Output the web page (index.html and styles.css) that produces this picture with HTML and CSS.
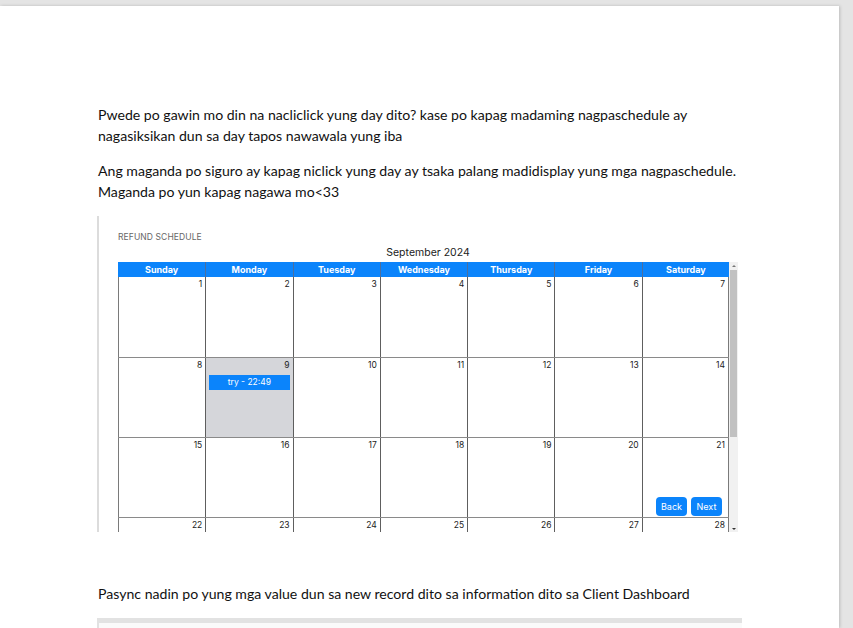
FILE: index.html
```html
<!DOCTYPE html>
<html>
<head>
<meta charset="utf-8">
<link rel="stylesheet" href="styles.css">
</head>
<body>
<div class="page">
  <p class="txt">Pwede po gawin mo din na nacliclick yung day dito? kase po kapag madaming nagpaschedule ay nagasiksikan dun sa day tapos nawawala yung iba</p>
  <p class="txt">Ang maganda po siguro ay kapag niclick yung day ay tsaka palang madidisplay yung mga nagpaschedule. Maganda po yun kapag nagawa mo&lt;33</p>
  <div class="shot">
    <div class="label">REFUND SCHEDULE</div>
    <div class="month">September 2024</div>
    <div class="cal">
      <div class="grid">
        <div class="head">
          <div>Sunday</div><div>Monday</div><div>Tuesday</div><div>Wednesday</div><div>Thursday</div><div>Friday</div><div>Saturday</div>
        </div>
        <div class="row first">
          <div class="cell"><span class="num">1</span></div>
          <div class="cell"><span class="num">2</span></div>
          <div class="cell"><span class="num">3</span></div>
          <div class="cell"><span class="num">4</span></div>
          <div class="cell"><span class="num">5</span></div>
          <div class="cell"><span class="num">6</span></div>
          <div class="cell"><span class="num">7</span></div>
        </div>
        <div class="row">
          <div class="cell"><span class="num">8</span></div>
          <div class="cell sel"><span class="num">9</span><div class="event">try - 22:49</div></div>
          <div class="cell"><span class="num">10</span></div>
          <div class="cell"><span class="num">11</span></div>
          <div class="cell"><span class="num">12</span></div>
          <div class="cell"><span class="num">13</span></div>
          <div class="cell"><span class="num">14</span></div>
        </div>
        <div class="row">
          <div class="cell"><span class="num">15</span></div>
          <div class="cell"><span class="num">16</span></div>
          <div class="cell"><span class="num">17</span></div>
          <div class="cell"><span class="num">18</span></div>
          <div class="cell"><span class="num">19</span></div>
          <div class="cell"><span class="num">20</span></div>
          <div class="cell last"><span class="num">21</span>
            <div class="btns"><span class="btn">Back</span><span class="btn">Next</span></div>
          </div>
        </div>
        <div class="row">
          <div class="cell"><span class="num">22</span></div>
          <div class="cell"><span class="num">23</span></div>
          <div class="cell"><span class="num">24</span></div>
          <div class="cell"><span class="num">25</span></div>
          <div class="cell"><span class="num">26</span></div>
          <div class="cell"><span class="num">27</span></div>
          <div class="cell"><span class="num">28</span></div>
        </div>
      </div>
      <div class="sbar">
        <div class="arr up"></div>
        <div class="track"><div class="thumb"></div></div>
        <div class="arr down"></div>
      </div>
    </div>
  </div>
  <p class="txt last-p">Pasync nadin po yung mga value dun sa new record dito sa information dito sa Client Dashboard</p>
  <div class="graybox"></div>
</div>
</body>
</html>
```

FILE: styles.css
```css
html, body {
  margin: 0;
  padding: 0;
  background: #e4e4e4;
  overflow: hidden;
}
.page {
  width: 839px;
  height: 622px;
  margin-top: 6px;
  background: #fff;
  box-sizing: border-box;
  padding: 98px 0 0 98px;
  overflow: hidden;
  box-shadow: 1px 0 3px rgba(0,0,0,0.18);
}
.txt {
  margin: 0 0 14px;
  width: 660px;
  font-family: Lato, "Open Sans", sans-serif;
  font-size: 14.1px;
  line-height: 21px;
  color: #111;
}
.shot {
  margin: 1px 0 0 -1px;
  width: 643px;
  height: 316px;
  border-left: 2px solid #dcdcdc;
  padding: 16px 0 0 19px;
  box-sizing: border-box;
  font-family: Inter, "DejaVu Sans", sans-serif;
  overflow: hidden;
}
.label {
  font-size: 8.5px;
  color: #666;
  height: 11px;
  line-height: 11px;
  letter-spacing: 0.1px;
}
.month {
  width: 620px;
  text-align: center;
  font-size: 10.5px;
  color: #222;
  margin-top: 3px;
  height: 16px;
  line-height: 14px;
}
.cal {
  display: flex;
  width: 620px;
  height: 271px;
  overflow: hidden;
}
.grid {
  width: 611px;
  flex: none;
}
.head {
  display: grid;
  grid-template-columns: repeat(7, 1fr);
  background: #0b84fb;
  height: 15px;
}
.head div {
  color: #fff;
  font-size: 9px;
  font-weight: 700;
  text-align: center;
  line-height: 15px;
  border-left: 1px solid #4a6fa0;
}
.head div:first-child { border-left: none; }
.row {
  display: grid;
  grid-template-columns: repeat(7, 1fr);
  height: 80px;
  box-sizing: border-box;
  border-bottom: 1px solid #8a8a8a;
}
.row.first { height: 81px; }
.cell {
  border-left: 1px solid #5e5e5e;
  position: relative;
  padding: 2px 2px 0 2px;
  text-align: right;
  font-size: 8.5px;
  line-height: 11px;
}
.cell:first-child { border-left: 1px solid #7a7a7a; }
.cell:last-child { border-right: 1px solid #7a7a7a; }
.num {
  color: #222;
  padding-right: 1px;
}
.sel { background: #d5d6da; }
.event {
  margin: 4px 1px 0 1px;
  background: #0b84fb;
  color: #fff;
  font-size: 8.5px;
  text-align: center;
  line-height: 15px;
  height: 15px;
}
.btns {
  position: absolute;
  right: 6px;
  bottom: 1px;
  display: flex;
  gap: 4px;
}
.btn {
  background: #0b84fb;
  color: #fff;
  font-size: 9px;
  border-radius: 4px;
  padding: 0 4px;
  height: 19px;
  line-height: 19px;
  width: 23px;
  text-align: center;
}
.sbar {
  width: 9px;
  display: flex;
  flex-direction: column;
  background: #f1f1f1;
}
.arr { height: 8px; position: relative; }
.arr::after {
  content: "";
  position: absolute;
  left: 3px;
  border-left: 2px solid transparent;
  border-right: 2px solid transparent;
}
.up::after { top: 3px; border-bottom: 2px solid #777; }
.down::after { top: 3px; border-top: 2px solid #333; }
.down { margin-top: auto; }
.track { flex: 1; }
.thumb {
  margin: 0 1px;
  height: 167px;
  background: #c1c1c1;
}
.last-p { margin-top: 51px; }
.graybox {
  margin-top: 14px;
  margin-left: -1px;
  width: 645px;
  height: 20px;
  background: #fafafa;
  border-top: 5px solid #e2e2e2;
  border-left: 2px solid #e2e2e2;
  box-sizing: border-box;
}
```
